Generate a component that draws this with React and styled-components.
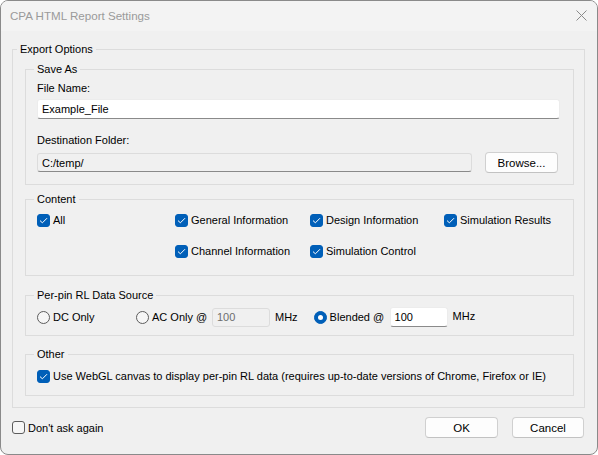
import React from 'react';
import styled, { createGlobalStyle } from 'styled-components';

const GlobalStyle = createGlobalStyle`
  html, body {
    margin: 0;
    padding: 0;
    background: #ffffff;
  }
  body {
    font-family: "Segoe UI", "Liberation Sans", Arial, sans-serif;
    font-size: 11px;
    color: #000000;
  }
  * {
    box-sizing: border-box;
  }
`;

const Window = styled.div`
  width: 598px;
  height: 455px;
  border: 1px solid #8a8a8a;
  border-radius: 8px;
  background: #f0f0f0;
  overflow: hidden;
  display: flex;
  flex-direction: column;
`;

const TitleBar = styled.div`
  height: 30px;
  flex: none;
  background: #f3f3f3;
  display: flex;
  align-items: center;
  justify-content: space-between;
  padding: 0 10px 1px 9px;
  color: #9a9a9a;
  font-size: 11.6px;
`;

const CloseButton = styled.div`
  width: 12px;
  height: 12px;
  display: flex;
  align-items: center;
  justify-content: center;
`;

const Body = styled.div`
  flex: 1;
  padding: 10px 12px 0 11px;
  display: flex;
  flex-direction: column;
`;

// group box drawn with fieldset/legend, like the native one
const Group = styled.fieldset`
  margin: ${(p) => p.$margin || '0'};
  padding: ${(p) => p.$padding || '0'};
  border: 1px solid #dcdcdc;
  min-width: 0;
  display: flex;
  flex-direction: column;
`;

// legend sits after the fieldset's left padding, so the offset may be negative
const Legend = styled.legend`
  margin-left: ${(p) => p.$offset ?? -3}px;
  padding: 0 3px;
  line-height: 16px;
  height: 16px;
`;

const FieldLabel = styled.div`
  line-height: 16px;
  height: 16px;
  margin-top: ${(p) => p.$top || 0}px;
`;

const TextBox = styled.div`
  height: ${(p) => p.$height || 20}px;
  width: ${(p) => (p.$width ? `${p.$width}px` : 'auto')};
  flex: ${(p) => (p.$grow ? 1 : 'none')};
  margin-top: ${(p) => p.$top || 0}px;
  background: ${(p) => (p.$disabled ? '#f0f0f0' : '#ffffff')};
  border: 1px solid ${(p) => (p.$disabled ? '#dcdcdc' : '#ececec')};
  border-bottom-color: ${(p) => (p.$flat ? '#dcdcdc' : '#8a8a8a')};
  border-radius: 3px;
  padding: 0 4px;
  display: flex;
  align-items: center;
  color: ${(p) => (p.$dimmed ? '#6d6d6d' : '#000000')};
`;

const BrowseRow = styled.div`
  display: flex;
  align-items: center;
  gap: 13px;
  margin-top: 4px;
  margin-right: 2px;
`;

const Button = styled.div`
  width: ${(p) => p.$width || 73}px;
  height: 21px;
  flex: none;
  background: #fdfdfd;
  border: 1px solid #d0d0d0;
  border-bottom-color: #c2c2c2;
  border-radius: 4px;
  display: flex;
  align-items: center;
  justify-content: center;
  font-size: 11.5px;
`;

const CheckGrid = styled.div`
  display: grid;
  grid-template-columns: 138px 135px 134px auto;
  grid-auto-rows: 16px;
  row-gap: 15px;
`;

const Option = styled.label`
  display: flex;
  align-items: center;
  gap: 3px;
  height: 16px;
  white-space: nowrap;
  width: ${(p) => (p.$width ? `${p.$width}px` : 'auto')};
  flex: none;
`;

const Box = styled.span`
  width: 13px;
  height: 13px;
  flex: none;
  border-radius: 3px;
  display: flex;
  align-items: center;
  justify-content: center;
  background: ${(p) => (p.$checked ? '#005fb8' : '#f6f6f6')};
  border: 1px solid ${(p) => (p.$checked ? '#005fb8' : '#5c5c5c')};
`;

const Radio = styled.span`
  width: 13px;
  height: 13px;
  flex: none;
  border-radius: 50%;
  display: flex;
  align-items: center;
  justify-content: center;
  background: ${(p) => (p.$checked ? '#005fb8' : '#f6f6f6')};
  border: 1px solid ${(p) => (p.$checked ? '#005fb8' : '#5c5c5c')};

  &::after {
    content: '';
    display: ${(p) => (p.$checked ? 'block' : 'none')};
    width: 5px;
    height: 5px;
    border-radius: 50%;
    background: #ffffff;
  }
`;

const RadioRow = styled.div`
  display: flex;
  align-items: center;
  height: 20px;
`;

const Unit = styled.span`
  margin: 0 16px 0 5px;
  margin-top: ${(p) => (p.$raise ? '-2px' : '0')};
`;

const Footer = styled.div`
  display: flex;
  align-items: center;
  justify-content: space-between;
  margin: 9px 1px 0 0;
`;

const Buttons = styled.div`
  display: flex;
  gap: 14px;
`;

function CheckBox({ checked, children }) {
  return (
    <Option>
      <Box $checked={checked}>
        {checked && (
          <svg width="9" height="7" viewBox="0 0 9 7">
            <path d="M1 3.6 L3.4 5.8 L8 1.2" fill="none" stroke="#ffffff" strokeWidth="1" />
          </svg>
        )}
      </Box>
      {children}
    </Option>
  );
}

function RadioOption({ checked, width, children }) {
  return (
    <Option $width={width}>
      <Radio $checked={checked} />
      {children}
    </Option>
  );
}

const contentItems = [
  { label: 'All' },
  { label: 'General Information' },
  { label: 'Design Information' },
  { label: 'Simulation Results' },
  null,
  { label: 'Channel Information' },
  { label: 'Simulation Control' },
];

export default function App() {
  return (
    <>
      <GlobalStyle />
      <Window>
        <TitleBar>
          <span>CPA HTML Report Settings</span>
          <CloseButton>
            <svg width="11" height="11" viewBox="0 0 11 11">
              <path d="M0.5 0.5 L10.5 10.5 M10.5 0.5 L0.5 10.5" stroke="#8a8a8a" strokeWidth="1" />
            </svg>
          </CloseButton>
        </TitleBar>
        <Body>
          <Group $padding="4px 10px 11px 12px">
            <Legend $offset={-8}>Export Options</Legend>

            <Group $padding="3px 13px 11px 11px">
              <Legend>Save As</Legend>
              <FieldLabel>File Name:</FieldLabel>
              <TextBox $height={20} $top={3}>Example_File</TextBox>
              <FieldLabel $top={13}>Destination Folder:</FieldLabel>
              <BrowseRow>
                <TextBox $grow $disabled $height={19}>C:/temp/</TextBox>
                <Button>Browse...</Button>
              </BrowseRow>
            </Group>

            <Group $margin="6px 0 0 0" $padding="5px 10px 16px 11px">
              <Legend>Content</Legend>
              <CheckGrid>
                {contentItems.map((item, i) =>
                  item ? (
                    <CheckBox key={i} checked>
                      {item.label}
                    </CheckBox>
                  ) : (
                    <span key={i} />
                  )
                )}
              </CheckGrid>
            </Group>

            <Group $margin="11px 0 0 0" $padding="4px 10px 8px 11px">
              <Legend>Per-pin RL Data Source</Legend>
              <RadioRow>
                <RadioOption width={99}>DC Only</RadioOption>
                <RadioOption width={76}>AC Only @</RadioOption>
                <TextBox $width={58} $height={19} $disabled $flat $dimmed>100</TextBox>
                <Unit>MHz</Unit>
                <RadioOption checked width={76}>Blended @</RadioOption>
                <TextBox $width={58} $height={20}>100</TextBox>
                <Unit $raise>MHz</Unit>
              </RadioRow>
            </Group>

            <Group $margin="10px 0 0 0" $padding="6px 10px 11px 11px">
              <Legend>Other</Legend>
              <CheckBox checked>
                Use WebGL canvas to display per-pin RL data (requires up-to-date versions of Chrome, Firefox or IE)
              </CheckBox>
            </Group>
          </Group>

          <Footer>
            <CheckBox>Don't ask again</CheckBox>
            <Buttons>
              <Button>OK</Button>
              <Button $width={72}>Cancel</Button>
            </Buttons>
          </Footer>
        </Body>
      </Window>
    </>
  );
}
